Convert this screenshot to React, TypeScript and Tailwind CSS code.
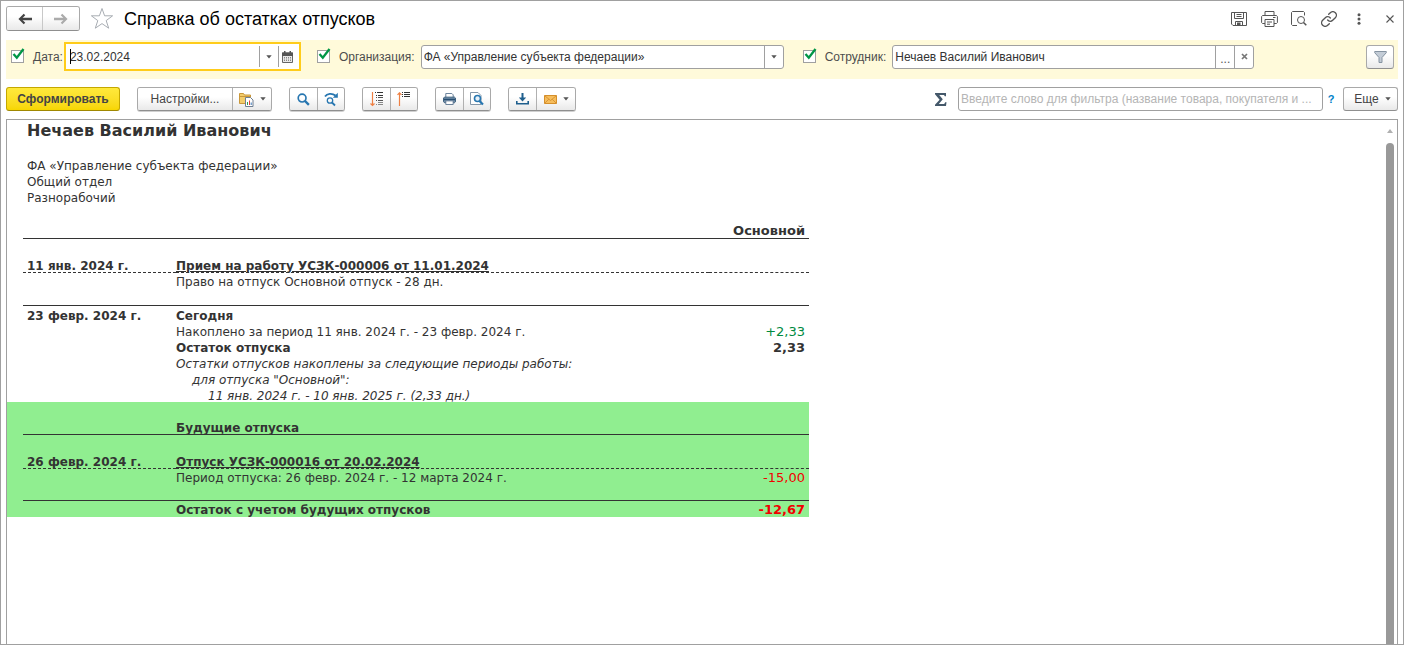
import React from "react";

const BTN = "bg-linear-to-b from-white from-40% to-[#e9e9e9] hover:to-[#dedede]";
const GROUP =
  "flex h-6 shrink-0 divide-x divide-[#b0b0b0] overflow-hidden rounded-[3px] border border-[#a9a9a9] border-b-[#8f8f8f] shadow-[0_1px_0_#d0d0d0]";

function Group({ children }: { children: React.ReactNode }) {
  return <div className={GROUP}>{children}</div>;
}

function ToolButton({ label, children, wide }: { label: string; children: React.ReactNode; wide?: boolean }) {
  return (
    <button
      type="button"
      aria-label={label}
      className={`${BTN} flex items-center justify-center ${wide ? "w-[38px] gap-1.5" : "w-7 last:w-[26px]"}`}
    >
      {children}
    </button>
  );
}

function Caret() {
  return (
    <svg width="6" height="4" viewBox="0 0 6 4" className="shrink-0" aria-hidden="true">
      <path d="M.3.3h5.400L3 3.500z" fill="#555" />
    </svg>
  );
}

function Check({ id, label }: { id: string; label: string }) {
  return (
    <span className="relative flex size-[13px] shrink-0">
      <input
        id={id}
        type="checkbox"
        defaultChecked
        aria-label={label}
        className="peer size-[13px] appearance-none border border-[#a0a0a0] bg-white"
      />
      <svg
        className="pointer-events-none absolute -top-0.5 left-0 hidden peer-checked:block"
        width="15"
        height="14"
        viewBox="0 0 15 14"
        aria-hidden="true"
      >
        <path d="M2.500 6l3.300 3.800L12.500 1" fill="none" stroke="#009646" strokeWidth="2.300" />
      </svg>
    </span>
  );
}

function FieldButton({ label, children }: { label: string; children: React.ReactNode }) {
  return (
    <button
      type="button"
      aria-label={label}
      className="flex w-[19px] shrink-0 items-center justify-center border-l border-[#a0a0a0] text-xs text-[#555]"
    >
      {children}
    </button>
  );
}

function Header() {
  return (
    <header className="flex h-[39px] items-center pb-1">
      <div className="flex h-[25px] shrink-0 divide-x divide-[#c8c8c8] overflow-hidden rounded-[3px] border border-[#a9a9a9] border-b-[#8f8f8f]">
        <button type="button" aria-label="Назад" className={`${BTN} flex w-9 items-center justify-center`}>
          <svg width="16" height="12" viewBox="0 0 16 12" aria-hidden="true">
            <path d="M15 6H4" stroke="#444" strokeWidth="2.600" />
            <path d="M7.500 1.500L3 6l4.500 4.500" fill="none" stroke="#444" strokeWidth="2.200" />
          </svg>
        </button>
        <button type="button" aria-label="Вперед" className={`${BTN} flex w-9 items-center justify-center`}>
          <svg width="16" height="12" viewBox="0 0 16 12" aria-hidden="true">
            <path d="M1 6h11" stroke="#ababab" strokeWidth="2.600" />
            <path d="M8.500 1.500L13 6l-4.500 4.500" fill="none" stroke="#ababab" strokeWidth="2.200" />
          </svg>
        </button>
      </div>
      <button type="button" aria-label="Избранное" className="ml-2.5 shrink-0">
        <svg width="24" height="23" viewBox="0 0 24 23" aria-hidden="true">
          <path
            d="M12 1.500l2.600 7.300h8l-6.400 4.800 2.500 7.600L12 16.600l-6.700 4.600 2.500-7.600L1.400 8.800h8z"
            fill="#fff"
            stroke="#a8adb3"
            strokeWidth="1"
          />
        </svg>
      </button>
      <h1 className="ml-2.5 text-lg text-black">Справка об остатках отпусков</h1>
      <div className="ml-auto flex items-center text-[#555]">
        <button type="button" aria-label="Сохранить" className="flex w-[30px] justify-center">
          <svg width="16" height="16" viewBox="0 0 16 16" fill="none" stroke="currentColor" aria-hidden="true">
            <path d="M.5 1.500h15v13H2L.5 13zM3.500 1.500v6h9v-6M5.500 3.500h5M5.500 5.500h5M4.500 14.500v-4h7v4" />
            <path d="M6 11.500h3.500v3H6z" fill="currentColor" stroke="none" />
          </svg>
        </button>
        <button type="button" aria-label="Печать" className="flex w-[30px] justify-center">
          <svg width="17" height="16" viewBox="0 0 17 16" fill="none" stroke="currentColor" aria-hidden="true">
            <path d="M4 4.500v-4h9v4M4 12.500H1.500l-.9-.9V5.500l.9-1h14l.9 1v6.100l-.9.900H13M4 8.500h9v7H4zM6 11h5M6 13.200h3" />
            <path d="M12 6.500h2.500" />
          </svg>
        </button>
        <button type="button" aria-label="Предварительный просмотр" className="flex w-[30px] justify-center">
          <svg width="16" height="16" viewBox="0 0 16 16" fill="none" stroke="currentColor" aria-hidden="true">
            <path d="M6 14.500H1.500l-1-1V1.500l1-1h11l1 1v3" />
            <circle cx="10" cy="9" r="3.500" />
            <path d="M12.500 11.500l2.800 2.800" strokeWidth="1.500" />
          </svg>
        </button>
        <button type="button" aria-label="Ссылка" className="flex w-[30px] justify-center">
          <svg width="16" height="16" viewBox="0 0 24 24" fill="none" stroke="currentColor" strokeWidth="2" strokeLinecap="round" aria-hidden="true">
            <path d="M10 13.500a5 5 0 0 0 7.500.5l4-4a5 5 0 0 0-7.500-7.500l-2.500 2.500" />
            <path d="M14 10.500a5 5 0 0 0-7.500-.5l-4 4a5 5 0 0 0 7.500 7.500l2.500-2.500" />
          </svg>
        </button>
        <button type="button" aria-label="Дополнительно" className="flex w-[30px] justify-center">
          <svg width="4" height="12" viewBox="0 0 4 12" fill="currentColor" aria-hidden="true">
            <circle cx="2" cy="1.700" r="1.500" />
            <circle cx="2" cy="6" r="1.500" />
            <circle cx="2" cy="10.300" r="1.500" />
          </svg>
        </button>
        <button type="button" aria-label="Закрыть" className="ml-2 flex w-4 justify-center">
          <svg width="8" height="8" viewBox="0 0 8 8" aria-hidden="true">
            <path d="M.5.5l7 7M7.500.5l-7 7" stroke="#555" strokeWidth="1.100" />
          </svg>
        </button>
      </div>
    </header>
  );
}

function Filters() {
  return (
    <div className="flex h-[39px] items-center bg-[#fffada] pb-1.5 pl-[5px] text-xs text-[#4d4d4d]">
      <Check id="use-date" label="Использовать дату" />
      <label htmlFor="date" className="ml-[9px] shrink-0">Дата:</label>
      <div className="relative ml-px flex h-[29px] w-[237px] border-2 border-[#ffcc1a] bg-white py-0.5 pr-0.5">
        <input id="date" defaultValue="23.02.2024" className="min-w-0 flex-1 bg-transparent pl-1 text-[#333] outline-none" />
        <span className="absolute top-[5px] left-1 h-[15px] w-px bg-black" aria-hidden="true" />
        <FieldButton label="Выбрать из списка"><Caret /></FieldButton>
        <FieldButton label="Календарь">
          <svg width="11" height="12" viewBox="0 0 11 12" className="shrink-0" aria-hidden="true">
            <path d="M.5 2h10v9.500H.5z" fill="#e8e8e8" stroke="#666" />
            <path d="M0 1.500h11V5H0zM2 0h1.500v2H2zM7.500 0H9v2H7.500z" fill="#555" />
            <path d="M2 6.500h7M2 8h7M2 9.500h7" stroke="#888" strokeDasharray="1 1" />
          </svg>
        </FieldButton>
      </div>
      <span className="w-4 shrink-0" />
      <Check id="use-org" label="Использовать организацию" />
      <label htmlFor="org" className="ml-[9px] shrink-0">Организация:</label>
      <div className="ml-1.5 flex h-6 w-[363px] rounded-[3px] border border-[#a0a0a0] bg-white">
        <input id="org" defaultValue="ФА «Управление субъекта федерации»" className="min-w-0 flex-1 pl-0.5 text-[#333] outline-none" />
        <FieldButton label="Выбрать из списка"><Caret /></FieldButton>
      </div>
      <span className="w-[19px] shrink-0" />
      <Check id="use-emp" label="Использовать сотрудника" />
      <label htmlFor="emp" className="ml-[9px] shrink-0">Сотрудник:</label>
      <div className="ml-1.5 flex h-6 w-[362px] rounded-[3px] border border-[#a0a0a0] bg-white">
        <input id="emp" defaultValue="Нечаев Василий Иванович" className="min-w-0 flex-1 pl-0.5 text-[#333] outline-none" />
        <FieldButton label="Выбрать"><span className="pt-1">...</span></FieldButton>
        <FieldButton label="Очистить">
          <svg width="7" height="7" viewBox="0 0 7 7" aria-hidden="true">
            <path d="M1 1l5 5M6 1L1 6" stroke="#777" strokeWidth="1.700" />
          </svg>
        </FieldButton>
      </div>
      <button
        type="button"
        aria-label="Отбор"
        className={`${BTN} mr-1 ml-auto flex h-6 w-7 shrink-0 items-center justify-center rounded-[3px] border border-[#a9a9a9] border-b-[#8f8f8f]`}
      >
        <svg width="13" height="12" viewBox="0 0 13 12" aria-hidden="true">
          <path d="M.7.5h11.600v1.200L8 6.500v5H5v-5L.7 1.700z" fill="#c3ccd6" stroke="#8593a1" />
        </svg>
      </button>
    </div>
  );
}

function Toolbar() {
  return (
    <div className="flex h-10 items-center gap-[17px] text-xs text-[#444]">
      <button
        type="button"
        className="h-6 w-[114px] shrink-0 rounded-[3px] border border-[#c4a700] border-b-[#a08800] bg-linear-to-b from-[#ffe93b] to-[#f7d600] font-bold"
      >
        Сформировать
      </button>
      <Group>
        <button type="button" className={`${BTN} w-[95px]`}>Настройки...</button>
        <ToolButton label="Варианты отчета" wide>
          <svg width="15" height="15" viewBox="0 0 15 15" className="shrink-0" aria-hidden="true">
            <path d="M.5 11.500v-10h4l1 1.500h6v8.500z" fill="#f3cd6b" stroke="#c9973a" />
            <path d="M.5 4.500h11" stroke="#c9973a" />
            <path d="M6.500 5.500h5l2.500 2.500v6.500H6.500z" fill="#fff" stroke="#6e7f92" />
            <path d="M8.500 10v3" stroke="#2f9e4f" />
            <path d="M10.500 8.500V13" stroke="#e0453a" />
            <path d="M12.200 10.500V13" stroke="#3f79b8" />
          </svg>
          <Caret />
        </ToolButton>
      </Group>
      <Group>
        <ToolButton label="Найти">
          <svg width="13" height="13" viewBox="0 0 14 14" fill="none" stroke="#2776b0" aria-hidden="true">
            <circle cx="5.500" cy="5.500" r="4.200" strokeWidth="1.800" />
            <path d="M8.500 8.500l4.300 4.300" strokeWidth="2.400" />
          </svg>
        </ToolButton>
        <ToolButton label="Найти далее">
          <svg width="15" height="15" viewBox="0 0 15 15" fill="none" stroke="#2776b0" aria-hidden="true">
            <path d="M1 4.500C3 1.500 8 .8 11.500 3.500" strokeWidth="1.800" />
            <path d="M13.800.8v5H8.800z" fill="#2776b0" stroke="none" />
            <circle cx="6" cy="8.500" r="2.700" strokeWidth="1.300" />
            <path d="M8 10.500l3 3" strokeWidth="1.800" />
          </svg>
        </ToolButton>
      </Group>
      <Group>
        <ToolButton label="Развернуть группы">
          <svg width="13" height="15" viewBox="0 0 13 15" fill="none" aria-hidden="true">
            <path d="M2.500 0v13.500M.5 11.500l2 2 2-2" stroke="#ee8044" strokeWidth="1.200" />
            <path d="M5 .5h1M7 .5h6M6 3.500h1M8 3.500h5" stroke="#333" />
            <path d="M6 5.500h1M8 5.500h5M6 8.500h1M8 8.500h5" stroke="#555" />
            <path d="M8 10.500h5M6 12.500h1M8 12.500h5" stroke="#888" />
          </svg>
        </ToolButton>
        <ToolButton label="Свернуть группы">
          <svg width="14" height="15" viewBox="0 0 14 15" fill="none" aria-hidden="true">
            <path d="M2.500 14V.8M.5 2.800l2-2 2 2" stroke="#ee8044" strokeWidth="1.200" />
            <path d="M5 .5h1M7 .5h6M5 2.500h1M7 2.500h6M5 4.500h1M7 4.500h6" stroke="#333" />
          </svg>
        </ToolButton>
      </Group>
      <Group>
        <ToolButton label="Печать">
          <svg width="13" height="12" viewBox="0 0 14 13" aria-hidden="true">
            <path d="M3 5V.5h6.500L11 2v3" fill="#fff" stroke="#5b7590" />
            <path d="M1.500 4.500h11l1 1v4l-1 1h-11l-1-1v-4z" fill="#7390ab" stroke="#345877" />
            <path d="M1 7h12" stroke="#264d70" strokeWidth="1.500" />
            <path d="M3 8.500h8v4H3z" fill="#fff" stroke="#5b7590" />
          </svg>
        </ToolButton>
        <ToolButton label="Просмотр">
          <svg width="14" height="14" viewBox="0 0 14 14" fill="none" aria-hidden="true">
            <path d="M.5.5h7.500l3 3v9H.5z" fill="#fff" stroke="#8497a9" />
            <circle cx="7.500" cy="6.500" r="3" fill="#e6f1fa" stroke="#2776b0" strokeWidth="1.600" />
            <path d="M9.500 9l3.500 3.500" stroke="#2776b0" strokeWidth="2.200" />
          </svg>
        </ToolButton>
      </Group>
      <Group>
        <ToolButton label="Сохранить">
          <svg width="13" height="12" viewBox="0 0 13 12" fill="none" stroke="#1f5f8d" aria-hidden="true">
            <path d="M6.500 0v5.500" strokeWidth="2" />
            <path d="M2.800 4.500h7.400L6.500 8.500z" fill="#1f5f8d" stroke="none" />
            <path d="M.8 8v2.800h11.400V8" strokeWidth="1.600" />
          </svg>
        </ToolButton>
        <ToolButton label="Отправить" wide>
          <svg width="13" height="9" viewBox="0 0 13 9" fill="none" className="shrink-0" aria-hidden="true">
            <path d="M.5.5h12v8H.5z" fill="#f6bd5c" stroke="#d58f2b" />
            <path d="M.8.8l5.700 4.700L12.200.8M.8 8.200l4-4M12.200 8.200l-4-4" stroke="#d08a2a" strokeWidth=".8" />
          </svg>
          <Caret />
        </ToolButton>
      </Group>
      <div className="flex min-w-0 flex-1 items-center justify-end">
        <svg width="12" height="13" viewBox="0 0 12 13" className="mr-[11px] shrink-0" role="img" aria-label="Сумма">
          <path d="M0 0h11v3.200h-1.200L9 2H4.200l3.600 4.300L3.800 11H9.200l1-1.700h1.300L11 13H0v-1.200L4.600 6.700 0 1.200z" fill="#44586a" />
        </svg>
        <input
          type="text"
          aria-label="Фильтр"
          placeholder="Введите слово для фильтра (название товара, покупателя и ..."
          className="h-6 w-[365px] min-w-0 rounded-[3px] border border-[#a0a0a0] bg-white pl-0.5 outline-none placeholder:text-[#b5b5b5]"
        />
        <button type="button" aria-label="Справка" className="w-4 shrink-0 text-[11px] font-bold text-[#0080c8]">?</button>
        <button
          type="button"
          className={`${BTN} ml-1 flex h-6 w-[55px] shrink-0 items-center justify-center gap-1.5 rounded-[3px] border border-[#a9a9a9] border-b-[#8f8f8f] pl-1`}
        >
          Еще <Caret />
        </button>
      </div>
    </div>
  );
}

type Row = {
  date?: string;
  text?: string;
  value?: string;
  line?: "solid" | "dashed";
  look?: string;
  valueLook?: string;
  link?: boolean;
  height?: string;
  pad?: string;
};

const PAST: Row[] = [
  { value: "Основной", valueLook: "text-[13px] font-bold", line: "solid", pad: "pt-[3px]" },
  { height: "h-[17px]" },
  { date: "11 янв. 2024 г.", text: "Прием на работу УСЗК-000006 от 11.01.2024", look: "font-bold", link: true, line: "dashed" },
  { text: "Право на отпуск Основной отпуск - 28 дн.", pad: "pt-[3px]" },
  { line: "solid" },
  { date: "23 февр. 2024 г.", text: "Сегодня", look: "font-bold" },
  { text: "Накоплено за период 11 янв. 2024 г. - 23 февр. 2024 г.", value: "+2,33", valueLook: "text-[13px] text-[#008a3e]" },
  { text: "Остаток отпуска", value: "2,33", look: "font-bold", valueLook: "text-[13px] font-bold" },
  { text: "Остатки отпусков накоплены за следующие периоды работы:", look: "italic" },
  { text: 'для отпуска "Основной":', look: "italic pl-4" },
  { text: "11 янв. 2024 г. - 10 янв. 2025 г. (2,33 дн.)", look: "italic pl-8" },
];

const FUTURE: Row[] = [
  {},
  { text: "Будущие отпуска", look: "font-bold", line: "solid" },
  { height: "h-[17px]" },
  { date: "26 февр. 2024 г.", text: "Отпуск УСЗК-000016 от 20.02.2024", look: "font-bold", link: true, line: "dashed" },
  { text: "Период отпуска: 26 февр. 2024 г. - 12 марта 2024 г.", value: "-15,00", valueLook: "text-[13px] text-[#f00000]", pad: "pt-[3px]" },
  { line: "solid", height: "h-4" },
  { text: "Остаток с учетом будущих отпусков", value: "-12,67", look: "font-bold", valueLook: "text-[13px] font-bold text-[#f00000]", pad: "pt-[3px]" },
];

const LINES = { solid: "border-b border-[#333]", dashed: "border-b border-dashed border-[#333]" };

function ReportRow({ row }: { row: Row }) {
  const height = row.height ?? (row.line ? "h-[17px]" : "h-4");
  const cell = `${height} ${row.line ? LINES[row.line] : ""} ${row.pad ?? (row.text ? "pt-1" : "")} align-top leading-[12px]`;
  return (
    <tr>
      <td />
      <td className={`${cell} pl-1 font-bold`}>{row.date}</td>
      <td className={`${cell} ${row.look ?? ""}`}>
        {row.link ? <a href="#document" className="underline">{row.text}</a> : row.text}
      </td>
      <td className={`${cell} pr-1 text-right ${row.valueLook ?? ""}`}>{row.value}</td>
    </tr>
  );
}

function Report() {
  return (
    <div className="min-w-0 flex-1 overflow-hidden font-['DejaVu_Sans',sans-serif] text-xs leading-[12px] whitespace-nowrap text-[#333]">
      <div className="pl-5">
        <h2 className="mb-3.5 text-base leading-[22px] font-bold">Нечаев Василий Иванович</h2>
        <p className="pt-1">ФА «Управление субъекта федерации»</p>
        <p className="pt-1">Общий отдел</p>
        <p className="pt-1">Разнорабочий</p>
      </div>
      <table className="mt-[18px] w-[802px] table-fixed border-separate border-spacing-0">
        <colgroup>
          <col className="w-4" />
          <col className="w-[153px]" />
          <col />
          <col className="w-[100px]" />
        </colgroup>
        <tbody>
          {PAST.map((row, i) => <ReportRow key={i} row={row} />)}
        </tbody>
        <tbody className="bg-[#90ee90]">
          {FUTURE.map((row, i) => <ReportRow key={i} row={row} />)}
        </tbody>
      </table>
    </div>
  );
}

export default function App() {
  return (
    <main className="flex min-h-screen flex-col border border-[#a0a0a0] bg-white px-[5px] font-['Liberation_Sans',Arial,sans-serif]">
      <Header />
      <Filters />
      <Toolbar />
      <section className="flex flex-1 border border-b-0 border-[#a0a0a0]">
        <Report />
        <div className="flex w-[11px] shrink-0 flex-col pr-[3px]" aria-hidden="true">
          <svg width="8" height="23" viewBox="0 0 8 23">
            <path d="M1 13h6L4 9z" fill="#b0b0b0" />
          </svg>
          <div className="w-2 flex-1 rounded-t-full bg-[#999]" />
        </div>
      </section>
    </main>
  );
}
